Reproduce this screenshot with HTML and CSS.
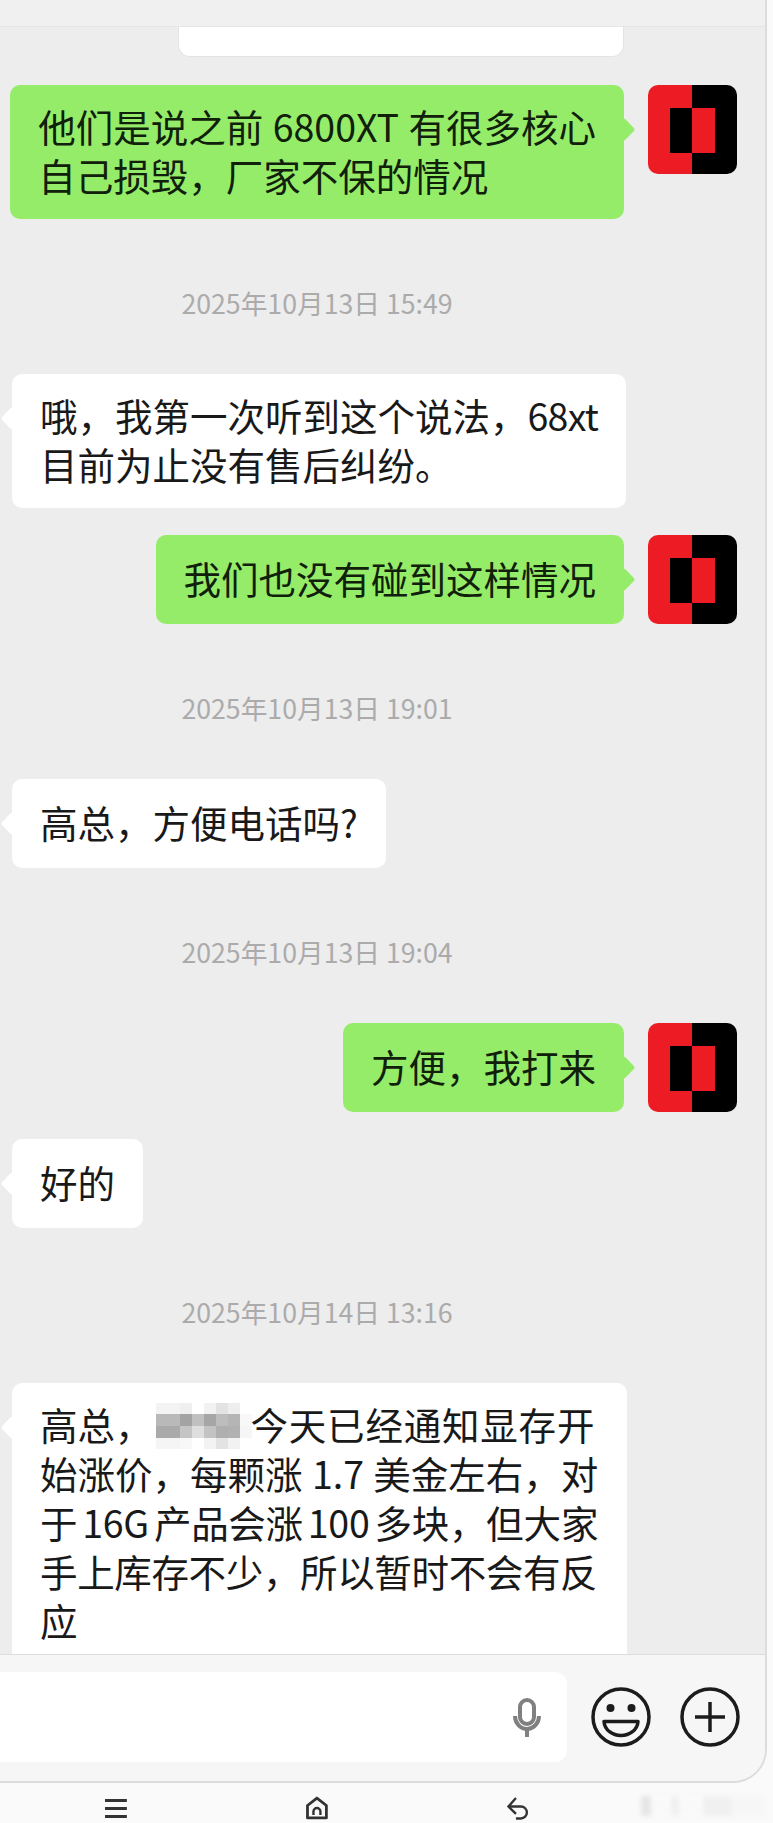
FILE: index.html
```html
<!DOCTYPE html>
<html lang="zh-CN">
<head>
    <meta charset="UTF-8">
    <meta name="viewport" content="width=device-width, initial-scale=1.0">
    <title>聊天</title>
    <link rel="stylesheet" href="styles.css">
</head>
<body>

    <svg class="defs" width="0" height="0">
        <symbol id="avatar" viewBox="0 0 89 89">
            <rect width="45" height="89" fill="#ed1c24"/>
            <rect x="44" width="45" height="89" fill="#000"/>
            <rect x="22" y="23" width="22" height="45" fill="#000"/>
            <rect x="44" y="23" width="23" height="45" fill="#ed1c24"/>
        </symbol>
    </svg>

    <div class="window">
        <div class="topbar"></div>

        <div class="chat">
            <div class="card"></div>

            <div class="msg me first">
                <div class="bubble"><p><span class="wide">他们是说之前 6800XT 有很多核心</span><br>自己损毁，厂家不保的情况</p></div>
                <svg class="avatar"><use href="#avatar"/></svg>
            </div>

            <div class="time">2025年10月13日 15:49</div>

            <div class="msg">
                <div class="bubble"><p>哦，我第一次听到这个说法，<span class="narrow">68xt</span><br>目前为止没有售后纠纷。</p></div>
            </div>

            <div class="msg me next">
                <div class="bubble"><p>我们也没有碰到这样情况</p></div>
                <svg class="avatar"><use href="#avatar"/></svg>
            </div>

            <div class="time">2025年10月13日 19:01</div>

            <div class="msg">
                <div class="bubble"><p>高总，方便电话吗?</p></div>
            </div>

            <div class="time">2025年10月13日 19:04</div>

            <div class="msg me">
                <div class="bubble"><p>方便，我打来</p></div>
                <svg class="avatar"><use href="#avatar"/></svg>
            </div>

            <div class="msg next">
                <div class="bubble"><p>好的</p></div>
            </div>

            <div class="time">2025年10月14日 13:16</div>

            <div class="msg">
                <div class="bubble"><p>高总，<svg class="mosaic" viewBox="0 0 96 46" width="96" height="46">
                    <rect x="0" y="0" width="24" height="11" fill="#f3f3f3"/>
                    <rect x="24" y="0" width="12" height="11" fill="#efefef"/>
                    <rect x="48" y="0" width="12" height="11" fill="#f2f2f2"/>
                    <rect x="60" y="0" width="12" height="11" fill="#e3e3e3"/>
                    <rect x="72" y="0" width="12" height="11" fill="#eeeeee"/>
                    <rect x="0" y="11" width="24" height="12" fill="#b9b9b9"/>
                    <rect x="24" y="11" width="12" height="12" fill="#a3a3a3"/>
                    <rect x="36" y="11" width="12" height="12" fill="#c0c0c0"/>
                    <rect x="48" y="11" width="12" height="12" fill="#a6a6a6"/>
                    <rect x="60" y="11" width="12" height="12" fill="#bdbdbd"/>
                    <rect x="72" y="11" width="12" height="12" fill="#b5b5b5"/>
                    <rect x="84" y="11" width="12" height="12" fill="#f8f8f8"/>
                    <rect x="0" y="23" width="24" height="12" fill="#aaaaaa"/>
                    <rect x="24" y="23" width="12" height="12" fill="#c5c5c5"/>
                    <rect x="36" y="23" width="12" height="12" fill="#dedede"/>
                    <rect x="48" y="23" width="12" height="12" fill="#c3c3c3"/>
                    <rect x="60" y="23" width="12" height="12" fill="#afafaf"/>
                    <rect x="72" y="23" width="12" height="12" fill="#b1b1b1"/>
                    <rect x="84" y="23" width="12" height="12" fill="#f6f6f6"/>
                    <rect x="0" y="35" width="24" height="11" fill="#f5f5f5"/>
                    <rect x="24" y="35" width="12" height="11" fill="#f8f8f8"/>
                    <rect x="48" y="35" width="12" height="11" fill="#f3f3f3"/>
                    <rect x="60" y="35" width="12" height="11" fill="#e3e3e3"/>
                    <rect x="72" y="35" width="12" height="11" fill="#f2f2f2"/>
                </svg><span class="spread">今天已经通知显存开</span><br><span class="wide">始涨价，每颗涨 1.7 美金左右，对</span><br><span class="tight">于 16G 产品会涨 100 多块，</span>但大家<br><span class="squeeze">手上库存不少，所以暂时不会有反</span><br>应</p></div>
            </div>
        </div>

        <div class="inputbar">
            <div class="inputbox">
                <svg class="mic" width="32" height="42" viewBox="0 0 32 42" fill="none" stroke="#808080" stroke-width="4">
                    <rect x="9" y="4" width="14" height="24" rx="7"/>
                    <path d="M4 20a12 13 0 0 0 24 0"/>
                    <path d="M16 33v8"/>
                </svg>
            </div>
            <svg class="round-icon" width="60" height="60" viewBox="0 0 60 60" fill="none" stroke="#1c1c1c" stroke-width="3.5">
                <circle cx="30" cy="30" r="28"/>
                <circle cx="19.500" cy="21" r="4" fill="#1c1c1c" stroke="none"/>
                <circle cx="40.500" cy="21" r="4" fill="#1c1c1c" stroke="none"/>
                <path d="M13 34.500H47C46.500 43 38.500 48.500 30 48.500S13.500 43 13 34.500Z" stroke-linejoin="round"/>
            </svg>
            <svg class="round-icon" width="60" height="60" viewBox="0 0 60 60" fill="none" stroke="#1c1c1c" stroke-width="3.5">
                <circle cx="30" cy="30" r="28"/>
                <path d="M15 30H45M30 15V45"/>
            </svg>
        </div>
    </div>

    <div class="navbar">
        <svg width="24" height="24" viewBox="0 0 24 24" fill="none" stroke="#333" stroke-width="3">
            <path d="M1 4.500H23M1 12.500H23M1 20.500H23"/>
        </svg>
        <svg width="24" height="24" viewBox="0 0 24 24" fill="none" stroke="#333" stroke-width="2.800" stroke-linejoin="round">
            <path d="M2.500 9.500 12 2l9.500 7.500V22h-19Z"/>
            <path d="M8.500 19v-3.500a3.500 3.500 0 0 1 7 0V19" stroke-width="2.400"/>
        </svg>
        <svg width="24" height="24" viewBox="0 0 24 24" fill="none" stroke="#333" stroke-width="2.400">
            <path d="M10 2 2.500 10.500 10 18"/>
            <path d="M2.500 10.500H15a6 6 0 0 1 0 12h-5"/>
        </svg>
        <div class="nav-smudge"></div>
    </div>

</body>
</html>
```

FILE: styles.css
```css
body {
    margin: 0;
    width: 773px;
    height: 1823px;
    overflow: hidden;
    background-color: #fafafa;
    font-family: "Noto Sans CJK SC", "Noto Sans", sans-serif;
}
.defs {
    display: block;
    height: 0;
}
.window {
    width: 765px;
    height: 1781px;
    display: flex;
    flex-direction: column;
    overflow: hidden;
    border-right: 2px solid #dcdcdc;
    border-bottom: 2px solid #dcdcdc;
    border-bottom-right-radius: 34px;
}
.topbar {
    height: 26px;
    flex: none;
    background: #f0f0f0;
    border-bottom: 1px solid #e6e6e6;
}
.chat {
    flex: 1;
    min-height: 0;
    overflow: hidden;
    background: #ededed;
}
.card {
    width: 446px;
    height: 30px;
    margin-left: 178px;
    box-sizing: border-box;
    background: #fff;
    border: 1px solid #e4e4e4;
    border-top: none;
    border-radius: 0 0 12px 12px;
}
.msg {
    display: flex;
    align-items: flex-start;
    gap: 24px;
    padding: 0 28px 0 12px;
}
.msg.me {
    justify-content: flex-end;
}
.msg.first {
    margin-top: 28px;
}
.msg.next {
    margin-top: 27px;
}
.time {
    height: 40px;
    margin: 64px 0 51px;
    width: 634px;
    line-height: 40px;
    text-align: center;
    font-size: 26.700px;
    color: #ababab;
}
.bubble {
    position: relative;
    display: flex;
    align-items: center;
    box-sizing: border-box;
    min-height: 89px;
    padding: 16px 28px 20px;
    border-radius: 10px;
    background: #fff;
    color: #191919;
    font-size: 37.500px;
    line-height: 49px;
    white-space: nowrap;
}
.bubble::after {
    content: "";
    position: absolute;
    top: 36px;
    left: -8px;
    width: 17px;
    height: 17px;
    border-radius: 3px;
    background: inherit;
    transform: rotate(45deg);
}
.bubble p {
    margin: 0;
}
.me .bubble {
    background: #95ec69;
    color: #10200a;
}
.me .bubble::after {
    left: auto;
    right: -8px;
}
.wide {
    word-spacing: 1px;
}
.narrow {
    letter-spacing: -0.700px;
}
.tight {
    word-spacing: -3px;
    letter-spacing: -0.300px;
}
.spread {
    letter-spacing: 0.800px;
}
.squeeze {
    letter-spacing: -0.350px;
}
.avatar {
    width: 89px;
    height: 89px;
    flex: none;
    border-radius: 10px;
}
.mosaic {
    display: inline-block;
    width: 96px;
    height: 46px;
    margin: -10px -1px -10px 3px;
    vertical-align: 1px;
}
.inputbar {
    flex: none;
    height: 127px;
    box-sizing: border-box;
    display: flex;
    align-items: center;
    padding-bottom: 2px;
    background: #f6f6f6;
    border-top: 1px solid #dddddd;
}
.inputbox {
    width: 567px;
    height: 90px;
    display: flex;
    align-items: center;
    justify-content: flex-end;
    margin-right: 24px;
    padding-right: 24px;
    box-sizing: border-box;
    background: #fff;
    border-radius: 0 12px 12px 0;
}
.round-icon {
    flex: none;
}
.round-icon + .round-icon {
    margin-left: 29px;
}
.navbar {
    display: flex;
    gap: 177px;
    padding: 13px 8px 0 104px;
}
.nav-smudge {
    width: 125px;
    height: 20px;
    margin-left: -66px;
    filter: blur(2px);
    background: linear-gradient(90deg, #e6e6e6 0 10px, #f9f9f9 10px 30px, #f0f0f0 30px 38px, #f9f9f9 38px 62px, #f0f0f0 62px 90px, #f6f6f6 90px 125px);
}
```
